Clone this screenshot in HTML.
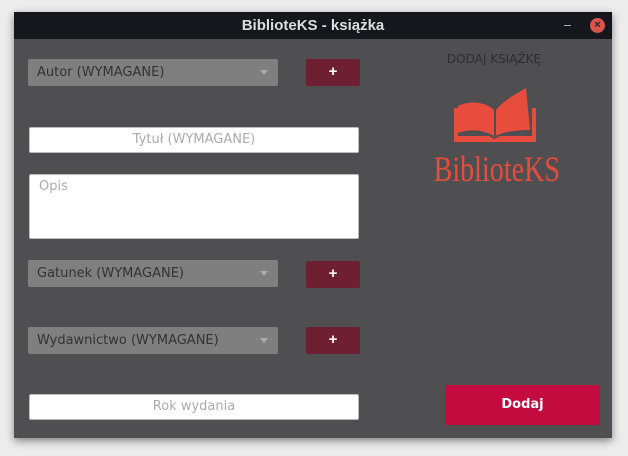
<!DOCTYPE html>
<html><head><meta charset="utf-8"><style>
*{margin:0;padding:0;box-sizing:border-box}
body{width:628px;height:456px;background:#ececec;font-family:"Liberation Sans","DejaVu Sans",sans-serif;position:relative;overflow:hidden}
.win{position:absolute;left:14px;top:12px;width:598px;height:426px;background:#4f4f51;box-shadow:0 3px 8px rgba(0,0,0,.45)}
.title{position:absolute;left:0;top:0;width:598px;height:27px;background:#16171c;color:#ddd;font-family:"Liberation Sans",sans-serif;font-weight:bold;font-size:15px;text-align:center;line-height:27px}
.min{position:absolute;left:550px;top:13px;width:7px;height:1px;background:#aaa}
.close{position:absolute;left:576px;top:6px;width:15px;height:15px;border-radius:50%;background:#d9534f;color:#222;font-size:11px;line-height:15px;text-align:center;font-weight:bold}
.combo{position:absolute;left:14px;width:250px;height:27px;background:#7f7f7f;border-radius:2px;color:#333;font-size:13px;line-height:27px;padding-left:9px;font-family:"DejaVu Sans",sans-serif}
.combo:after{content:"";position:absolute;right:10px;top:11px;border-left:4px solid transparent;border-right:4px solid transparent;border-top:5px solid #aaa}
.plus{position:absolute;left:292px;width:54px;height:27px;background:#6e1f31;border-radius:2px;color:#fff;font-weight:bold;font-size:15px;text-align:center;line-height:26px}
.inp{position:absolute;left:15px;width:330px;background:#fff;border-radius:2px;border:1px solid #bbb;color:#aaa;font-size:13px;font-family:"DejaVu Sans",sans-serif}
.dodaj{position:absolute;left:431px;top:373px;width:155px;height:40px;background:#c30b3f;border-radius:2px;color:#fff;font-weight:bold;font-size:13px;text-align:center;line-height:40px;font-family:"DejaVu Sans",sans-serif}
</style></head><body>
<div class="win">
<div class="title">BiblioteKS - książka</div>
<div class="min"></div><div class="close">×</div>
<div class="combo" style="top:47px">Autor (WYMAGANE)</div>
<div class="plus" style="top:47px">+</div>
<div class="inp" style="top:115px;height:26px;line-height:24px;text-align:center">Tytuł (WYMAGANE)</div>
<div class="inp" style="top:162px;height:65px;padding:4px 9px">Opis</div>
<div class="combo" style="top:248px">Gatunek (WYMAGANE)</div>
<div class="plus" style="top:249px">+</div>
<div class="combo" style="top:315px">Wydawnictwo (WYMAGANE)</div>
<div class="plus" style="top:315px">+</div>
<div class="inp" style="top:382px;height:26px;line-height:24px;text-align:center">Rok wydania</div>
<div style="position:absolute;left:420px;top:40px;width:120px;text-align:center;color:#2e2e2e;font-size:12px;font-family:'DejaVu Sans',sans-serif">DODAJ KSIĄŻKĘ</div>
<svg style="position:absolute;left:438px;top:76px" width="86" height="56" viewBox="0 0 86 56">
<path d="M2 20 L2 54 L84 54 L84 20 L80 20 L80 48 L6 48 L6 20Z" fill="#e74c3c"/>
<path d="M6 18 C18 12 34 14 42 22 L42 48 C32 42 18 42 6 46Z" fill="#e74c3c"/>
<path d="M44 22 C52 12 64 6 74 0 L78 42 C66 42 52 44 44 48Z" fill="#e74c3c"/>
<path d="M6 46 C18 42 32 42 42 50 C52 44 66 42 80 46" stroke="#4f4f51" stroke-width="2" fill="none"/>
</svg>
<div style="position:absolute;left:402px;top:136px;width:160px;text-align:center;color:#e74c3c;font-size:36px;font-family:'Liberation Serif',serif;transform:scaleX(0.78);transform-origin:center">BiblioteKS</div>
<div class="dodaj">Dodaj</div>
</div>
</body></html>
